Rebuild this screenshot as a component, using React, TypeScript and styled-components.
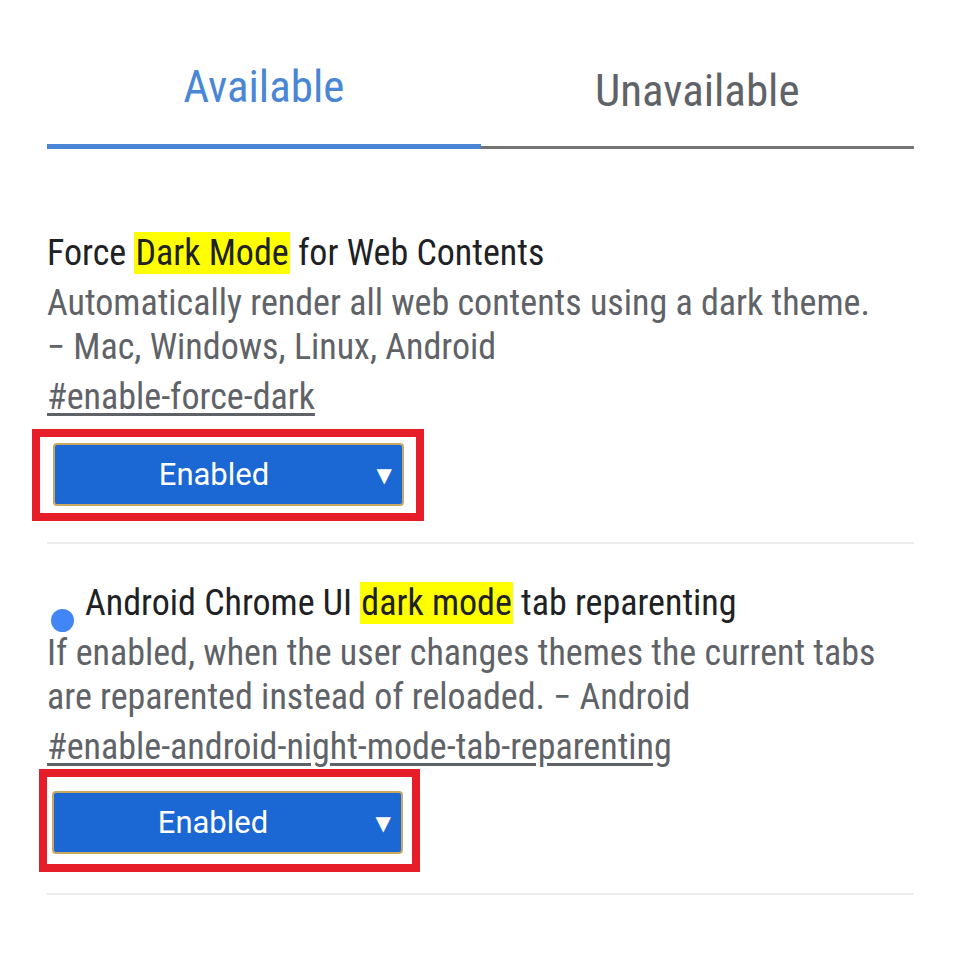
import React from "react";
import styled, { createGlobalStyle } from "styled-components";

const Global = createGlobalStyle`
  html, body { margin: 0; padding: 0; background: #ffffff; }
  body { font-family: Roboto, "Open Sans", sans-serif; font-stretch: 80%; font-weight: 400; }
`;

const Page = styled.div`
  width: 960px;
  height: 960px;
  box-sizing: border-box;
  padding: 0 46px 0 47px;
  overflow: hidden;
`;

const Tabs = styled.div`
  display: grid;
  grid-template-columns: 1fr 1fr;
  padding-top: 57px;
  align-items: end;
`;

const Tab = styled.div<{ $active?: boolean }>`
  text-align: center;
  font-size: 45px;
  line-height: 60px;
  color: ${(p) => (p.$active ? "#4a86d6" : "#5f6368")};
  padding-bottom: ${(p) => (p.$active ? 27 : 25)}px;
  border-bottom: ${(p) => (p.$active ? "5px solid #4a86d6" : "3px solid #747474")};
`;

const Section = styled.section<{ $top: number }>`
  padding-top: ${(p) => p.$top}px;
  padding-bottom: 21px;
  border-bottom: 2px solid #ececec;
  display: flex;
  flex-direction: column;
  align-items: flex-start;
`;

const Title = styled.div`
  display: flex;
  align-items: center;
  font-size: 36px;
  line-height: 44px;
  color: #202124;
  margin-bottom: 6px;
`;

const Dot = styled.span`
  width: 23px;
  height: 23px;
  border-radius: 50%;
  background: #4285f4;
  margin: 0 11px 0 4px;
  transform: translateY(17px);
  flex: none;
`;

const Mark = styled.mark`
  background: #ffff00;
  color: inherit;
  padding: 0 1px;
`;

const Desc = styled.p`
  margin: 0;
  font-size: 36px;
  line-height: 44px;
  color: #5f6368;
`;

const Link = styled.a`
  margin-top: 6px;
  font-size: 36px;
  line-height: 44px;
  color: #5f6368;
  text-decoration: underline;
  text-underline-offset: 4px;
`;

const RedBox = styled.div<{ $pad: string; $mt: number; $ml: number }>`
  margin-top: ${(p) => p.$mt}px;
  margin-left: ${(p) => p.$ml}px;
  border: 8px solid #e61e2a;
  padding: ${(p) => p.$pad};
`;

const Select = styled.div`
  width: 351px;
  height: 63px;
  box-sizing: border-box;
  background: #1b67d3;
  border: 2px solid #c9a862;
  border-radius: 4px;
  display: grid;
  grid-template-columns: 1fr 40px;
  align-items: center;
  color: #ffffff;
  font-family: Roboto, sans-serif;
  font-stretch: 100%;
  font-size: 31px;
`;

const SelectLabel = styled.span`
  text-align: center;
  padding-left: 11px;
`;

const Arrow = styled.span`
  justify-self: end;
  margin-right: 10px;
  font-size: 20px;
  font-family: "DejaVu Sans", sans-serif;
`;

export default function App() {
  return (
    <>
      <Global />
      <Page>
        <Tabs>
          <Tab $active>Available</Tab>
          <Tab>Unavailable</Tab>
        </Tabs>

        <Section $top={82}>
          <Title>
            <span>
              Force <Mark>Dark Mode</Mark> for Web Contents
            </span>
          </Title>
          <Desc>
            Automatically render all web contents using a dark theme. −&nbsp;Mac, Windows, Linux, Android
          </Desc>
          <Link>#enable-force-dark</Link>
          <RedBox $pad="6px 12px 7px 13px" $mt={10} $ml={-15}>
            <Select>
              <SelectLabel>Enabled</SelectLabel>
              <Arrow>▼</Arrow>
            </Select>
          </RedBox>
        </Section>

        <Section $top={37}>
          <Title>
            <Dot />
            <span>
              Android Chrome UI <Mark>dark mode</Mark> tab reparenting
            </span>
          </Title>
          <Desc>
            If enabled, when the user changes themes the current tabs are reparented instead of reloaded. −&nbsp;Android
          </Desc>
          <Link>#enable-android-night-mode-tab-reparenting</Link>
          <RedBox $pad="14px 9px 10px 5px" $mt={0} $ml={-8}>
            <Select>
              <SelectLabel>Enabled</SelectLabel>
              <Arrow>▼</Arrow>
            </Select>
          </RedBox>
        </Section>
      </Page>
    </>
  );
}
